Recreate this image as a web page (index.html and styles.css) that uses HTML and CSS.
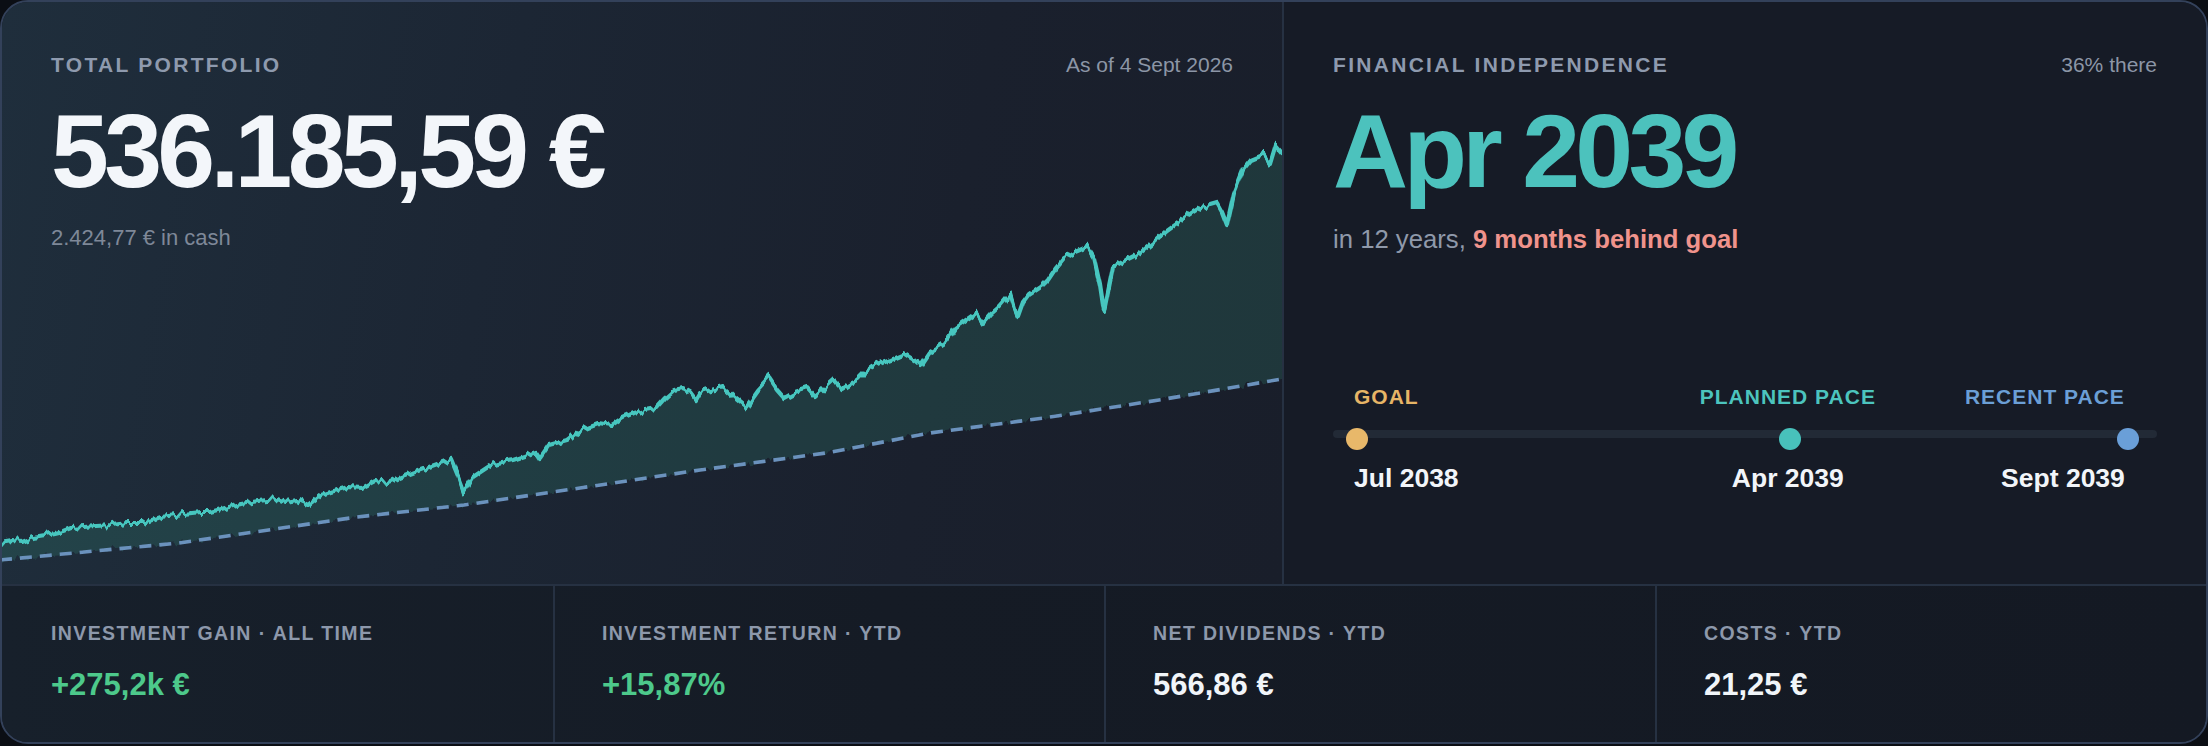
FILE: index.html
```html
<!DOCTYPE html>
<html lang="en">
<head>
<meta charset="utf-8">
<title>Portfolio overview</title>
<link rel="stylesheet" href="styles.css">
</head>
<body>
<div class="card">
  <div class="top">
    <section class="panel portfolio">
      <svg class="chart" viewBox="2 2 1280 582" preserveAspectRatio="none" aria-hidden="true">
        <defs>
          <filter id="jitter" x="-2%" y="-10%" width="104%" height="120%" color-interpolation-filters="sRGB">
            <feTurbulence type="fractalNoise" baseFrequency="0.2 0.004" numOctaves="2" seed="7" result="noise"/>
            <feComponentTransfer in="noise" result="map">
              <feFuncR type="linear" slope="0" intercept="0.5"/>
            </feComponentTransfer>
            <feDisplacementMap in="SourceGraphic" in2="map" scale="11" xChannelSelector="R" yChannelSelector="G"/>
          </filter>
        </defs>
        <g filter="url(#jitter)">
          <path class="area" d="M0 542 L12 540 L22 541 L33 537 L45 535 L55 533 L63 531 L71 528 L84 527 L96 526 L112 525 L127 523 L143 523 L152 520 L161 517 L176 515 L192 513 L201 512 L210 512 L225 508 L241 504 L258 501 L277 499 L286 502 L297 500 L308 505 L321 495 L334 491 L348 487 L362 488 L375 481 L388 483 L402 477 L415 472 L429 467 L440 463 L451 459 L458 476 L464 492 L473 477 L491 465 L502 462 L513 460 L525 456 L536 452 L540 458 L549 445 L567 440 L580 430 L598 423 L612 425 L622 418 L634 413 L645 410 L656 408 L665 398 L674 390 L683 388 L690 392 L696 400 L700 393 L711 390 L723 387 L735 398 L746 407 L758 390 L769 378 L777 390 L784 398 L795 392 L807 388 L815 397 L825 388 L834 380 L842 388 L850 383 L857 380 L865 372 L872 367 L882 363 L891 360 L903 355 L914 362 L920 367 L930 352 L945 343 L950 336 L956 327 L966 320 L976 313 L983 323 L991 314 L999 307 L1005 300 L1010 295 L1014 308 L1018 317 L1023 303 L1029 295 L1041 287 L1048 280 L1056 268 L1064 258 L1075 252 L1087 247 L1094 258 L1100 285 L1104 312 L1108 292 L1113 267 L1126 260 L1140 253 L1154 242 L1167 230 L1178 222 L1190 214 L1201 207 L1210 205 L1217 203 L1222 212 L1227 225 L1234 193 L1243 170 L1251 160 L1263 155 L1270 165 L1276 145 L1282 152 L1290 152 L1290 378 L1282 379 L1159 400 L1044 418 L930 433 L826 453 L700 470 L580 488 L464 505 L357 517 L179 543 L0 560 Z"/>
          <path class="line" d="M0 542 L12 540 L22 541 L33 537 L45 535 L55 533 L63 531 L71 528 L84 527 L96 526 L112 525 L127 523 L143 523 L152 520 L161 517 L176 515 L192 513 L201 512 L210 512 L225 508 L241 504 L258 501 L277 499 L286 502 L297 500 L308 505 L321 495 L334 491 L348 487 L362 488 L375 481 L388 483 L402 477 L415 472 L429 467 L440 463 L451 459 L458 476 L464 492 L473 477 L491 465 L502 462 L513 460 L525 456 L536 452 L540 458 L549 445 L567 440 L580 430 L598 423 L612 425 L622 418 L634 413 L645 410 L656 408 L665 398 L674 390 L683 388 L690 392 L696 400 L700 393 L711 390 L723 387 L735 398 L746 407 L758 390 L769 378 L777 390 L784 398 L795 392 L807 388 L815 397 L825 388 L834 380 L842 388 L850 383 L857 380 L865 372 L872 367 L882 363 L891 360 L903 355 L914 362 L920 367 L930 352 L945 343 L950 336 L956 327 L966 320 L976 313 L983 323 L991 314 L999 307 L1005 300 L1010 295 L1014 308 L1018 317 L1023 303 L1029 295 L1041 287 L1048 280 L1056 268 L1064 258 L1075 252 L1087 247 L1094 258 L1100 285 L1104 312 L1108 292 L1113 267 L1126 260 L1140 253 L1154 242 L1167 230 L1178 222 L1190 214 L1201 207 L1210 205 L1217 203 L1222 212 L1227 225 L1234 193 L1243 170 L1251 160 L1263 155 L1270 165 L1276 145 L1282 152"/>
        </g>
        <path class="plan" d="M0 560 L179 543 L357 517 L464 505 L580 488 L700 470 L826 453 L930 433 L1044 418 L1159 400 L1282 379"/>
      </svg>
      <div class="panel-head">
        <span class="eyebrow">TOTAL PORTFOLIO</span>
        <span class="meta">As of 4 Sept 2026</span>
      </div>
      <div class="hero">536.185,59 €</div>
      <div class="sub">2.424,77 € in cash</div>
    </section>

    <section class="panel fi">
      <div class="panel-head">
        <span class="eyebrow">FINANCIAL INDEPENDENCE</span>
        <span class="meta">36% there</span>
      </div>
      <div class="hero teal">Apr 2039</div>
      <div class="sub2">in 12 years, <strong>9 months behind goal</strong></div>

      <div class="timeline">
        <div class="track">
          <span class="dot dot-goal" style="left:2.91%"></span>
          <span class="dot dot-plan" style="left:55.46%"></span>
          <span class="dot dot-recent" style="left:96.48%"></span>
        </div>
        <div class="marker start" style="left:2.55%">
          <span class="m-label goal">GOAL</span>
          <span class="m-date">Jul 2038</span>
        </div>
        <div class="marker mid" style="left:55.2%">
          <span class="m-label plan">PLANNED PACE</span>
          <span class="m-date">Apr 2039</span>
        </div>
        <div class="marker end" style="left:96.1%">
          <span class="m-label recent">RECENT PACE</span>
          <span class="m-date">Sept 2039</span>
        </div>
      </div>
    </section>
  </div>

  <div class="stats">
    <div class="stat">
      <div class="stat-label">INVESTMENT GAIN · ALL TIME</div>
      <div class="stat-value pos">+275,2k €</div>
    </div>
    <div class="stat">
      <div class="stat-label">INVESTMENT RETURN · YTD</div>
      <div class="stat-value pos">+15,87%</div>
    </div>
    <div class="stat">
      <div class="stat-label">NET DIVIDENDS · YTD</div>
      <div class="stat-value">566,86 €</div>
    </div>
    <div class="stat">
      <div class="stat-label">COSTS · YTD</div>
      <div class="stat-value">21,25 €</div>
    </div>
  </div>
</div>
</body>
</html>
```

FILE: styles.css
```css
* {
  box-sizing: border-box;
  margin: 0;
  padding: 0;
}

html,
body {
  background: #0b0e14;
}

body {
  font-family: "Liberation Sans", Arial, sans-serif;
  color: #f2f5f9;
}

.card {
  width: 2208px;
  height: 744px;
  border: 2px solid #33415a;
  border-radius: 28px;
  overflow: hidden;
  display: grid;
  grid-template-rows: 584px 1fr;
  background: #161b26;
}

.top {
  display: grid;
  grid-template-columns: 1282px 1fr;
  border-bottom: 2px solid #263142;
}

.panel {
  position: relative;
  padding: 50px 49px 0 49px;
}

.portfolio {
  border-right: 2px solid #263142;
  background: linear-gradient(100deg, #1f2e3c 0%, #1c2634 38%, #1a202d 72%, #191e2a 100%);
  overflow: hidden;
}

.fi {
  background: #161b26;
}

.chart {
  position: absolute;
  left: 0;
  top: 0;
  width: 100%;
  height: 100%;
}

.chart .area {
  fill: rgba(70, 200, 160, 0.15);
}

.chart .line {
  fill: none;
  stroke: #47c6bf;
  stroke-width: 4.2;
  stroke-linejoin: round;
  stroke-linecap: round;
}

.chart .plan {
  fill: none;
  stroke: #6b92bd;
  stroke-width: 3.6;
  stroke-dasharray: 12 8;
}

.panel-head {
  position: relative;
  display: flex;
  justify-content: space-between;
  align-items: baseline;
  line-height: 25px;
}

.eyebrow {
  font-size: 21px;
  font-weight: 700;
  letter-spacing: 2.3px;
  color: #8e9aae;
}

.meta {
  font-size: 21px;
  color: #8c96a6;
}

.hero {
  position: relative;
  margin-top: 22px;
  font-size: 104px;
  line-height: 104px;
  font-weight: 700;
  letter-spacing: -4.7px;
  color: #f3f6fa;
}

.hero.teal {
  color: #4cc2bd;
}

.sub {
  position: relative;
  margin-top: 22px;
  font-size: 22px;
  line-height: 26px;
  color: #7e8898;
}

.sub2 {
  margin-top: 21px;
  font-size: 25.7px;
  line-height: 30px;
  color: #8f99aa;
}

.sub2 strong {
  font-weight: 700;
  color: #f0938c;
}

.timeline {
  position: relative;
  margin-top: 130px;
  height: 112px;
}

.track {
  position: absolute;
  left: 0;
  right: 0;
  top: 46px;
  height: 8px;
  border-radius: 4px;
  background: #222a36;
}

.dot {
  position: absolute;
  top: -2px;
  width: 22px;
  height: 22px;
  border-radius: 50%;
  transform: translateX(-50%);
}

.dot-goal { background: #e8b86a; }
.dot-plan { background: #48c1bb; }
.dot-recent { background: #6a9fd8; }

.marker {
  position: absolute;
  top: 0;
  display: flex;
  flex-direction: column;
  align-items: flex-start;
  gap: 53px;
  white-space: nowrap;
}

.marker.mid {
  transform: translateX(-50%);
  align-items: center;
}

.marker.end {
  transform: translateX(-100%);
  align-items: flex-end;
}

.m-label {
  font-size: 21px;
  line-height: 25px;
  font-weight: 700;
  letter-spacing: 1px;
}

.m-label.goal { color: #e6b566; }
.m-label.plan { color: #4cc4be; }
.m-label.recent { color: #6b9fd6; }

.m-date {
  font-size: 26.5px;
  line-height: 32px;
  font-weight: 700;
  color: #f2f5f9;
}

.stats {
  display: grid;
  grid-template-columns: repeat(4, 1fr);
  background: linear-gradient(90deg, #17202b 0%, #151b25 40%, #141923 100%);
}

.stat {
  padding: 36px 20px 0 49px;
}

.stat + .stat {
  border-left: 2px solid #263142;
  padding-left: 47px;
}

.stat-label {
  font-size: 19.5px;
  line-height: 23px;
  font-weight: 700;
  letter-spacing: 1.4px;
  color: #8d98ab;
}

.stat-value {
  margin-top: 22px;
  font-size: 31px;
  line-height: 36px;
  font-weight: 700;
  color: #f1f5f9;
}

.stat-value.pos {
  color: #4dc98b;
}
```
